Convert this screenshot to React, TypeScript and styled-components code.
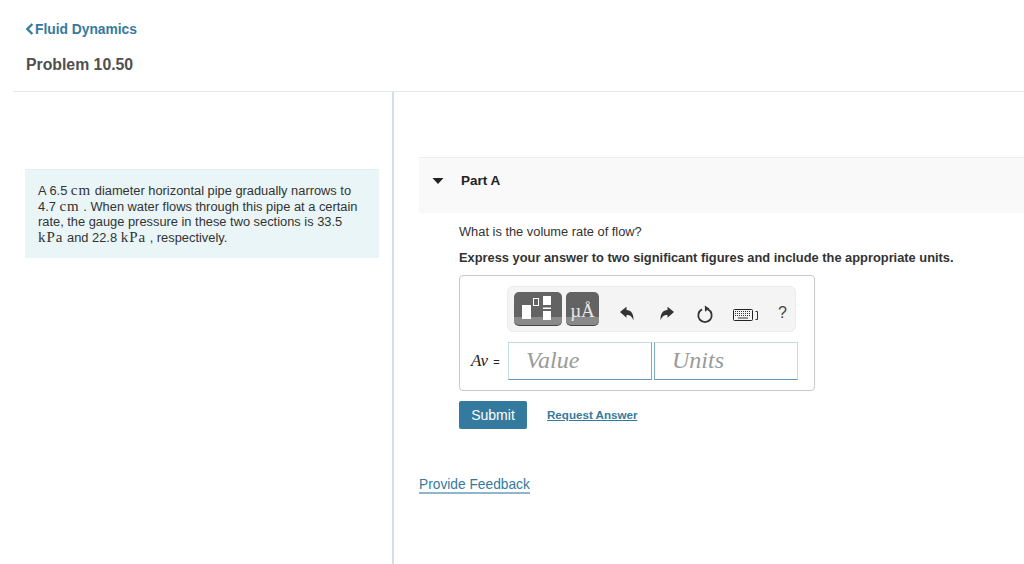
import styled, { createGlobalStyle } from 'styled-components';

const GlobalStyle = createGlobalStyle`
  html, body {
    margin: 0;
    padding: 0;
    height: 564px;
    overflow: hidden;
    background: #fff;
    font-family: "Liberation Sans", Arial, sans-serif;
  }
`;

export default function App() {
  return (
    <Page>
      <GlobalStyle />
      <Header>
        <BackLink>
          <svg width="9" height="12" viewBox="0 0 9 12">
            <path d="M7.4 1 L2.4 6 L7.4 11" fill="none" stroke="#347a9e" strokeWidth="2.4" />
          </svg>
          Fluid Dynamics
        </BackLink>
        <Title>Problem 10.50</Title>
      </Header>
      <Columns>
        <LeftColumn>
          <Intro>
            A 6.5 <MathText>cm</MathText> diameter horizontal pipe gradually narrows to<br />
            4.7 <MathText>cm</MathText> . When water flows through this pipe at a certain<br />
            rate, the gauge pressure in these two sections is 33.5<br />
            <MathText>kPa</MathText> and 22.8 <MathText>kPa</MathText> , respectively.
          </Intro>
        </LeftColumn>
        <RightColumn>
          <PartBar>
            <svg width="12" height="6" viewBox="0 0 12 6">
              <path d="M0.5 0 H11.5 L6 6 Z" fill="#222" />
            </svg>
            <PartTitle>Part A</PartTitle>
          </PartBar>
          <PartBody>
            <Question>What is the volume rate of flow?</Question>
            <Instruction>Express your answer to two significant figures and include the appropriate units.</Instruction>
            <AnswerBox>
              <Toolbar>
                <TemplateButton $wide>
                  <svg width="48" height="34" viewBox="0 0 48 34">
                    <rect x="8" y="13" width="9" height="14" fill="#fff" />
                    <rect x="19.5" y="6.5" width="5" height="7" fill="none" stroke="#fff" />
                    <rect x="29" y="4" width="8" height="9" fill="#fff" />
                    <rect x="29" y="15.5" width="8" height="1.5" fill="#fff" />
                    <rect x="29" y="19" width="8" height="9" fill="#fff" />
                  </svg>
                </TemplateButton>
                <TemplateButton>
                  <UnitGlyph>µÅ</UnitGlyph>
                </TemplateButton>
                <IconRow>
                  <UndoSlot>
                    <svg width="16" height="16" viewBox="0 0 16 16">
                      <path d="M1 6 L7.5 0.8 V4 C12 4.2 15 7.4 14.4 14.6 C13.2 10.8 11.4 9 7.5 9 V11.8 Z" fill="#333" />
                    </svg>
                  </UndoSlot>
                  <RedoSlot>
                    <svg width="16" height="16" viewBox="0 0 16 16">
                      <path d="M15 6 L8.5 0.8 V4 C4 4.2 1 7.4 1.6 14.6 C2.8 10.8 4.6 9 8.5 9 V11.8 Z" fill="#333" />
                    </svg>
                  </RedoSlot>
                  <ReloadSlot>
                    <svg width="18" height="18" viewBox="0 0 18 18">
                      <path d="M6 4.4 A6.7 6.7 0 1 0 12 4.4" fill="none" stroke="#333" strokeWidth="1.8" />
                      <path d="M8.8 0.4 L13.4 3.6 L9 6.8 Z" fill="#333" />
                    </svg>
                  </ReloadSlot>
                  <KeyboardSlot>
                    <svg width="26" height="12" viewBox="0 0 26 12">
                      <rect x="0.5" y="0.5" width="19" height="11" rx="1" fill="#f4f4f4" stroke="#222" />
                      <path d="M2 2.5 H18 M2 4.5 H18 M2 6.5 H18" stroke="#333" strokeDasharray="1 1" />
                      <path d="M5 9 H15" stroke="#333" />
                      <path d="M22.5 2.5 H24.5 V10.5 H22.5" fill="none" stroke="#333" />
                    </svg>
                  </KeyboardSlot>
                  <HelpMark>?</HelpMark>
                </IconRow>
              </Toolbar>
              <InputRow>
                <InputLabel><i>Av</i> <small>=</small></InputLabel>
                <AnswerInput placeholder="Value" readOnly $seam="right" />
                <AnswerInput placeholder="Units" readOnly $seam="left" />
              </InputRow>
            </AnswerBox>
            <Actions>
              <SubmitButton>Submit</SubmitButton>
              <RequestLink>Request Answer</RequestLink>
            </Actions>
          </PartBody>
          <FeedbackLink>Provide Feedback</FeedbackLink>
        </RightColumn>
      </Columns>
    </Page>
  );
}

const Page = styled.div`
  width: 1024px;
  height: 564px;
  display: flex;
  flex-direction: column;
  overflow: hidden;
  color: #333;
`;

const Header = styled.header`
  flex: none;
  height: 70px;
  margin-left: 13px;
  padding: 21px 0 0 12px;
  border-bottom: 1px solid #e3e7ec;
`;

const BackLink = styled.a`
  display: flex;
  align-items: center;
  gap: 1px;
  height: 16px;
  font-size: 13.8px;
  font-weight: 700;
  color: #347a9e;
`;

const Title = styled.h1`
  margin: 19px 0 0 1px;
  font-size: 15.8px;
  line-height: 18px;
  font-weight: 700;
  color: #4f4f4f;
`;

const Columns = styled.div`
  flex: 1;
  display: flex;
`;

const LeftColumn = styled.div`
  flex: none;
  width: 394px;
  box-sizing: border-box;
  padding: 77px 13px 0 25px;
  border-right: 2px solid #d3dfe8;
`;

const Intro = styled.div`
  height: 89px;
  box-sizing: border-box;
  padding: 13px 0 0 13px;
  background: #e9f5f7;
  border-top: 1px solid #e4f0f2;
  font-size: 12.85px;
  line-height: 15.7px;
  color: #333;
  white-space: nowrap;
`;

const MathText = styled.span`
  font-family: "Liberation Serif", serif;
  font-size: 15px;
  line-height: 1;
  letter-spacing: 1px;
`;

const RightColumn = styled.div`
  flex: 1;
  padding: 65px 0 0 25px;
`;

const PartBar = styled.div`
  height: 56px;
  box-sizing: border-box;
  display: flex;
  align-items: flex-start;
  gap: 17px;
  padding: 15px 0 0 13px;
  background: #f9f9f9;
  border-top: 1px solid #eeeeee;

  svg {
    margin-top: 5px;
  }
`;

const PartTitle = styled.h2`
  margin: 0;
  font-size: 13.5px;
  line-height: 16px;
  font-weight: 700;
  color: #222;
`;

const PartBody = styled.div`
  padding: 11px 0 0 40px;
`;

const Question = styled.p`
  margin: 0;
  font-size: 12.85px;
  line-height: 15px;
  color: #333;
`;

const Instruction = styled.p`
  margin: 11px 0 0;
  font-size: 12.85px;
  line-height: 15px;
  font-weight: 700;
  color: #333;
  white-space: nowrap;
`;

const AnswerBox = styled.div`
  width: 356px;
  height: 116px;
  margin-top: 10px;
  box-sizing: border-box;
  padding: 10px 16px 0 11px;
  border: 1px solid #c9c9c9;
  border-radius: 4px;
`;

const Toolbar = styled.div`
  width: 289px;
  height: 46px;
  margin-left: 36px;
  box-sizing: border-box;
  display: flex;
  align-items: center;
  gap: 4px;
  padding: 0 0 0 6px;
  background: #f4f4f4;
  border: 1px solid #ececec;
  border-radius: 6px;
`;

const TemplateButton = styled.div<{ $wide?: boolean }>`
  flex: none;
  width: ${({ $wide }) => ($wide ? '48px' : '33px')};
  height: 34px;
  box-sizing: border-box;
  display: flex;
  align-items: center;
  justify-content: center;
  border-radius: 5px;
  border-bottom: 1px solid #444;
  background: linear-gradient(#636363 0 76%, #8a8a8a 76% 100%);
`;

const UnitGlyph = styled.span`
  padding-top: 5px;
  font-family: "Liberation Serif", serif;
  font-size: 19px;
  color: #e8e8e8;
  white-space: nowrap;
`;

const IconRow = styled.div`
  flex: 1;
  display: flex;
  align-items: center;
  padding: 8px 0 0 16px;
`;

const IconSlot = styled.div`
  display: flex;
  align-items: center;
`;

const UndoSlot = styled(IconSlot)`
  width: 40px;
  margin-top: 2px;
`;

const RedoSlot = styled(IconSlot)`
  width: 37px;
  margin-top: 2px;
`;

const ReloadSlot = styled(IconSlot)`
  width: 37px;
  margin-top: 2px;
`;

const KeyboardSlot = styled(IconSlot)`
  width: 45px;
  margin-top: 4px;
`;

const HelpMark = styled.span`
  font-size: 16px;
  color: #444;
`;

const InputRow = styled.div`
  display: flex;
  align-items: center;
  margin-top: 10px;
`;

const InputLabel = styled.label`
  flex: none;
  width: 37px;
  font-family: "Liberation Serif", serif;
  font-size: 17px;
  white-space: nowrap;
  color: #222;

  small {
    margin-left: 1px;
    font-family: "Liberation Sans", sans-serif;
    font-size: 11px;
  }
`;

const AnswerInput = styled.input<{ $seam: 'left' | 'right' }>`
  width: 144px;
  height: 38px;
  box-sizing: border-box;
  margin-right: 2px;
  padding: 0 0 1px 17px;
  border: 1px solid #c5dbe4;
  border-bottom-color: #5c9ab8;
  border-${({ $seam }) => $seam}-color: #7aabc2;
  border-radius: 0;
  outline: none;
  background: #fff;
  font-family: "Liberation Serif", serif;
  font-style: italic;
  font-size: 24px;

  &::placeholder {
    color: #9a9a9a;
    opacity: 1;
  }
`;

const Actions = styled.div`
  display: flex;
  align-items: center;
  gap: 20px;
  margin-top: 10px;
`;

const SubmitButton = styled.button`
  width: 68px;
  height: 28px;
  padding: 0;
  border: none;
  border-radius: 2px;
  background: #347a9e;
  color: #fff;
  font-family: "Liberation Sans", sans-serif;
  font-size: 14px;
`;

const RequestLink = styled.a`
  margin-bottom: 2px;
  font-size: 11.6px;
  font-weight: 700;
  color: #347a9e;
  text-decoration: underline;
`;

const FeedbackLink = styled.a`
  display: inline-block;
  margin-top: 48px;
  font-size: 13.75px;
  line-height: 15px;
  color: #347a9e;
  border-bottom: 2px solid #8fb6ca;
`;
